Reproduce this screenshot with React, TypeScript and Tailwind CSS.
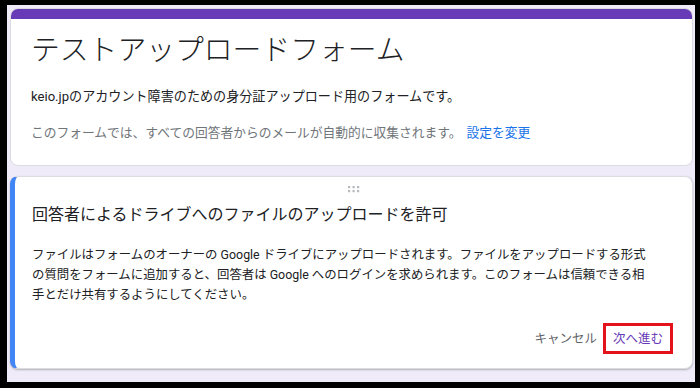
const font = "font-['Roboto','Noto_Sans_CJK_JP',sans-serif]";

function DragHandle() {
  const dots = [0, 1, 2].flatMap((c) => [0, 1].map((r) => ({ c, r })));
  return (
    <svg width="14" height="8" viewBox="0 0 14 8" aria-hidden>
      {dots.map(({ c, r }) => (
        <rect key={`${c}-${r}`} x={1 + c * 4.5} y={1 + r * 4} width="2.2" height="2.2" fill="#b7b9bd" />
      ))}
    </svg>
  );
}

export default function App() {
  return (
    <div className={`h-[388px] w-[700px] bg-black pb-[6px] pl-[7px] pr-[5px] pt-[5px] ${font}`}>
      <div className="flex h-full flex-col gap-[10px] bg-[#f0ebf8] pl-[3px] pr-[2px] pt-[3px]">
        {/* header card */}
        <div className="overflow-hidden rounded-lg border border-[#dadce0] bg-white">
          <div className="h-[10px] bg-[#673ab7]" />
          <div className="px-[20px] pb-[22px] pt-[13px]">
            <h1 className="text-[28.8px] leading-[36px] font-light text-[#202124]">
              テストアップロードフォーム
            </h1>
            <p className="mt-[19px] text-[13.1px] leading-[20px] text-[#202124]">
              keio.jpのアカウント障害のための身分証アップロード用のフォームです。
            </p>
            <p className="mt-[16px] text-[12.75px] leading-[20px] text-[#70757a]">
              このフォームでは、すべての回答者からのメールが自動的に収集されます。
              <span className="ml-[5px] text-[#1a73e8]">設定を変更</span>
            </p>
          </div>
        </div>

        {/* dialog card */}
        <div className="rounded-lg border border-l-[5px] border-[#dadce0] border-l-[#4285f4] bg-white shadow-[0_1px_2px_rgba(60,64,67,0.35)]">
          <div className="flex justify-center pt-[8px]">
            <DragHandle />
          </div>
          <div className="pl-[17px] pr-[20px]">
            <h2 className="mt-[10px] text-[16px] leading-[24px] text-[#202124]">
              回答者によるドライブへのファイルのアップロードを許可
            </h2>
            <p className="mt-[18px] text-[12.4px] leading-[20px] text-[#202124]">
              ファイルはフォームのオーナーの Google ドライブにアップロードされます。ファイルをアップロードする形式
              <br />
              の質問をフォームに追加すると、回答者は Google へのログインを求められます。このフォームは信頼できる相
              <br />
              手とだけ共有するようにしてください。
            </p>
          </div>
          <div className="mt-[18px] flex items-center justify-end pb-[14px] pr-[19px]">
            <button className="text-[12.5px] leading-[20px] text-[#5f6368]">キャンセル</button>
            <button className="ml-[6px] h-[31px] border-[3px] border-[#e3121b] px-[7px] text-[12.5px] leading-[20px] text-[#673ab7]">
              次へ進む
            </button>
          </div>
        </div>
      </div>
    </div>
  );
}
